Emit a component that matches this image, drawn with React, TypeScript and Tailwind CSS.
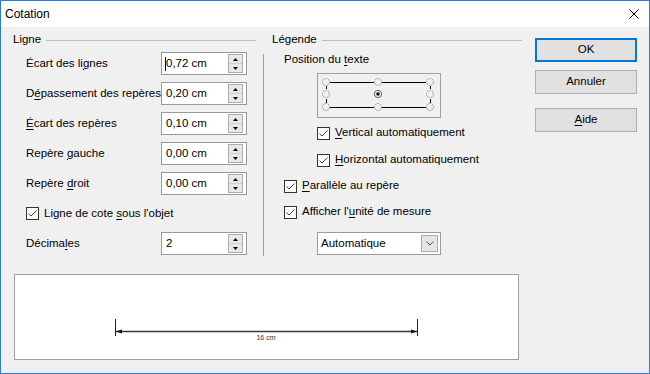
import type { ReactNode } from "react";

const FONT = "font-['Liberation_Sans',Arial,sans-serif]";

function Spin({ value, cursor }: { value: string; cursor?: boolean }) {
  return (
    <div className="flex h-[23px] w-[86px] items-center border border-[#9a9a9a] bg-white pl-[4px] pr-[3px]">
      {cursor && <span className="-ml-[1px] h-[14px] w-px bg-black" />}
      <span className="flex-1 whitespace-nowrap text-[11.5px] leading-none">{value}</span>
      <div className="flex h-[19px] w-[15px] flex-col border border-[#adadad] bg-[#e8e8e8]">
        <div className="flex flex-1 items-center justify-center border-b border-[#cfcfcf]">
          <svg width="5" height="3" viewBox="0 0 5 3">
            <path d="M0 3h5L2.5 0z" fill="#000" />
          </svg>
        </div>
        <div className="flex flex-1 items-center justify-center">
          <svg width="5" height="3" viewBox="0 0 5 3">
            <path d="M0 0h5L2.5 3z" fill="#000" />
          </svg>
        </div>
      </div>
    </div>
  );
}

function Check({ children }: { children: ReactNode }) {
  return (
    <div className="flex h-[16px] items-center gap-[5px]">
      <div className="flex h-[13px] w-[13px] items-center justify-center border border-[#333] bg-white">
        <svg width="11" height="11" viewBox="0 0 11 11">
          <path d="M1.5 5.5 L4 8 L9.5 2.5" fill="none" stroke="#444" strokeWidth="1" />
        </svg>
      </div>
      <span className="whitespace-nowrap text-[11.5px] leading-none">{children}</span>
    </div>
  );
}

function Row({ label, children }: { label: ReactNode; children: ReactNode }) {
  return (
    <div className="flex h-[23px] items-center pl-[13px] pr-[9px]">
      <span className="flex-1 whitespace-nowrap text-[11.5px] leading-none">{label}</span>
      {children}
    </div>
  );
}

function Heading({ text, indent }: { text: string; indent: string }) {
  return (
    <div className={`flex h-[14px] items-center ${indent}`}>
      <span className="text-[11.5px] leading-none">{text}</span>
      <div className="ml-[5px] h-px flex-1 bg-[#bcbcbc]" />
    </div>
  );
}

function Btn({ children, primary }: { children: ReactNode; primary?: boolean }) {
  return (
    <div
      className={`flex h-[24px] w-[102px] items-center justify-center bg-[#e1e1e1] text-[11.5px] leading-none ${
        primary ? "border-2 border-[#0078d7]" : "border border-[#adadad]"
      }`}
    >
      {children}
    </div>
  );
}

const U = ({ children }: { children: ReactNode }) => (
  <span className="underline underline-offset-2">{children}</span>
);

function PositionPicker() {
  const xs = [9, 61, 113];
  const ys = [9, 21, 34];
  return (
    <svg width="124" height="45" viewBox="0 0 124 45">
      <rect x="0.5" y="0.5" width="123" height="44" fill="none" stroke="#a0a0a0" />
      <path d="M13 9.5H57M65 9.5H109M13 34.5H57M65 34.5H109" stroke="#000" />
      <path d="M9.5 13V16M9.5 26V30M113.5 13V16M113.5 26V30" stroke="#000" />
      {ys.map((cy) =>
        xs.map((cx) =>
          cx === 61 && cy === 21 ? null : (
            <circle
              key={`${cx}-${cy}`}
              cx={cx}
              cy={cy}
              r="3.5"
              fill="#f0f0f0"
              stroke="#8c8c8c"
              strokeDasharray="1.6 1"
            />
          )
        )
      )}
      <circle cx="61" cy="21" r="3.6" fill="#fff" stroke="#5a5a5a" />
      <circle cx="61" cy="21" r="1.8" fill="#000" />
    </svg>
  );
}

export default function App() {
  return (
    <div className={`flex h-[374px] w-[650px] flex-col border border-[#2b7cd3] bg-[#f0f0f0] text-black ${FONT}`}>
      {/* title bar */}
      <div className="flex h-[26px] items-center justify-between bg-white pl-[4px] pr-[10px]">
        <span className="text-[12px] leading-none">Cotation</span>
        <svg width="10" height="10" viewBox="0 0 10 10">
          <path d="M0.5 0.5L9.5 9.5M9.5 0.5L0.5 9.5" stroke="#000" strokeWidth="1" />
        </svg>
      </div>

      <div className="flex flex-1 pl-[12px]">
        <div className="flex w-[509px] flex-col pt-[6px]">
          <div className="flex h-[223px]">
            {/* Ligne */}
            <div className="flex w-[243px] flex-col">
              <Heading text="Ligne" indent="" />
              <div className="mt-[5px] flex flex-col gap-[7px]">
                <Row label={<>Écart des li<U>g</U>nes</>}>
                  <Spin value="0,72 cm" cursor />
                </Row>
                <Row label={<>D<U>é</U>passement des repères</>}>
                  <Spin value="0,20 cm" />
                </Row>
                <Row label={<><U>É</U>cart des repères</>}>
                  <Spin value="0,10 cm" />
                </Row>
                <Row label={<>Repère <U>g</U>auche</>}>
                  <Spin value="0,00 cm" />
                </Row>
                <Row label={<>Repère <U>d</U>roit</>}>
                  <Spin value="0,00 cm" />
                </Row>
                <div className="flex h-[23px] items-center pl-[13px]">
                  <Check>
                    Ligne de cote <U>s</U>ous l'objet
                  </Check>
                </div>
                <Row label={<>Décima<U>l</U>es</>}>
                  <Spin value="2" />
                </Row>
              </div>
            </div>

            <div className="ml-[7px] mt-[21px] h-[202px] w-px bg-[#a0a0a0]" />

            {/* Légende */}
            <div className="flex w-[258px] flex-col">
              <Heading text="Légende" indent="pl-[8px]" />
              <div className="mt-[6px] flex h-[14px] items-center pl-[20px] text-[11.5px] leading-none">
                <span>
                  Position du <U>t</U>exte
                </span>
              </div>
              <div className="mt-[6px] pl-[53px]">
                <PositionPicker />
              </div>
              <div className="mt-[7px] pl-[53px]">
                <Check>
                  <U>V</U>ertical automatiquement
                </Check>
              </div>
              <div className="mt-[11px] pl-[53px]">
                <Check>
                  <U>H</U>orizontal automatiquement
                </Check>
              </div>
              <div className="mt-[10px] pl-[20px]">
                <Check>
                  <U>P</U>arallèle au repère
                </Check>
              </div>
              <div className="mt-[10px] pl-[20px]">
                <Check>
                  Afficher l'<U>u</U>nité de mesure
                </Check>
              </div>
              <div className="mt-[12px] pl-[53px]">
                <div className="flex h-[23px] w-[124px] items-center border border-[#9a9a9a] bg-white pl-[3px] pr-[2px]">
                  <span className="flex-1 text-[11.5px] leading-none">Automatique</span>
                  <div className="flex h-[17px] w-[17px] items-center justify-center border border-[#adadad] bg-[#e5e5e5]">
                    <svg width="8" height="5" viewBox="0 0 8 5">
                      <path d="M0.5 0.5L4 4L7.5 0.5" fill="none" stroke="#555" />
                    </svg>
                  </div>
                </div>
              </div>
            </div>
          </div>

          {/* preview */}
          <div className="ml-px mt-[18px] h-[86px] w-[505px] border border-[#a0a0a0] bg-white">
            <svg width="503" height="84" viewBox="0 0 503 84" className="block">
              <path d="M100.5 44V61M402.5 44V61" stroke="#222" strokeWidth="1" />
              <path d="M101 56.5H402" stroke="#3a3a3a" strokeWidth="1.4" />
              <path d="M101 56.5L107 54.5V58.5Z M402 56.5L396 54.5V58.5Z" fill="#111" />
              <text x="251" y="65" fontSize="7" textAnchor="middle" fill="#333" fontFamily="Liberation Sans, Arial, sans-serif">
                16 cm
              </text>
            </svg>
          </div>
        </div>

        {/* buttons */}
        <div className="ml-[13px] flex flex-col pt-[11px]">
          <Btn primary>OK</Btn>
          <div className="mt-[8px]">
            <Btn>Annuler</Btn>
          </div>
          <div className="mt-[14px]">
            <Btn>
              <U>A</U>ide
            </Btn>
          </div>
        </div>
      </div>
    </div>
  );
}
